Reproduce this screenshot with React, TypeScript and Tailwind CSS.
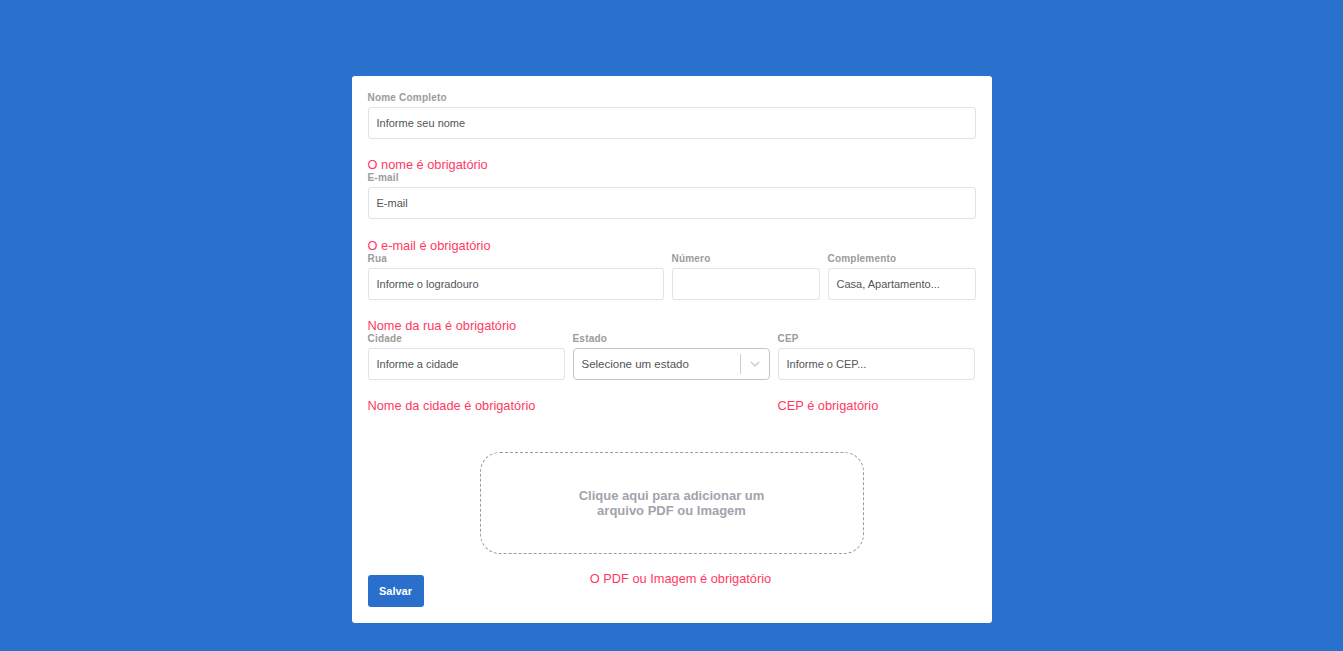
import React from 'react';

const font = { fontFamily: '"Liberation Sans", Arial, sans-serif' };

function Label({ children }: { children: React.ReactNode }) {
  return (
    <label className="block text-[10px] leading-[12px] font-bold text-[#9b9b9b] mb-[3px] tracking-[0.2px]">
      {children}
    </label>
  );
}

function Field({ label, placeholder }: { label: string; placeholder?: string }) {
  return (
    <div>
      <Label>{label}</Label>
      <div className="h-[32px] border border-[#e1e1ec] rounded-[3px] flex items-center px-[8px] text-[11px] text-[#555]">
        {placeholder}
      </div>
    </div>
  );
}

function Error({ children, className = 'mt-[18px]' }: { children?: React.ReactNode; className?: string }) {
  return (
    <div className={`${className} h-[15px] text-[12.8px] leading-[15px] text-[#ff3a62]`}>{children}</div>
  );
}

export default function App() {
  return (
    <div className="min-h-[651px] bg-[#2871cc] pt-[76px] pb-[28px]" style={font}>
      <div className="mx-auto w-[640px] bg-white rounded-[3px] px-[16px] pt-[16px] pb-[16px]">
        <Field label="Nome Completo" placeholder="Informe seu nome" />
        <Error>O nome é obrigatório</Error>

        <Field label="E-mail" placeholder="E-mail" />
        <Error className="mt-[19px]">O e-mail é obrigatório</Error>

        <div className="grid grid-cols-[2fr_1fr_1fr] gap-[8px]">
          <Field label="Rua" placeholder="Informe o logradouro" />
          <Field label="Número" />
          <Field label="Complemento" placeholder="Casa, Apartamento..." />
        </div>
        <Error>Nome da rua é obrigatório</Error>

        <div className="grid grid-cols-3 gap-[8px] pr-[1px]">
          <div>
            <Field label="Cidade" placeholder="Informe a cidade" />
            <Error>Nome da cidade é obrigatório</Error>
          </div>
          <div>
            <Label>Estado</Label>
            <div className="h-[32px] border border-[#c4c4c4] rounded-[4px] flex items-center text-[11.5px] text-[#555]">
              <span className="flex-1 pl-[8px] pt-[2px]">Selecione um estado</span>
              <span className="w-px h-[20px] bg-[#cfcfcf]" />
              <span className="w-[28px] flex items-center justify-center">
                <svg width="10" height="6" viewBox="0 0 10 6" fill="none">
                  <path d="M1 1l4 4 4-4" stroke="#c4c4c4" strokeWidth="1.2" />
                </svg>
              </span>
            </div>
          </div>
          <div>
            <Field label="CEP" placeholder="Informe o CEP..." />
            <Error>CEP é obrigatório</Error>
          </div>
        </div>

        <div className="mt-[39px] mx-auto w-[384px] h-[102px] border border-dashed border-[#9a9aa8] rounded-[20px] flex items-center justify-center text-center text-[13px] leading-[15px] font-bold text-[#a3a3ad]">
          Clique aqui para adicionar um
          <br />
          arquivo PDF ou Imagem
        </div>

        <div className="mt-[17px] grid grid-cols-[1fr_auto_1fr] items-start">
          <button className="mt-[4px] justify-self-start h-[32px] w-[56px] rounded-[3px] bg-[#2a6fcc] text-white text-[11px] font-bold">
            Salvar
          </button>
          <div className="ml-[18px] text-[12.8px] leading-[15px] text-[#ff3a62]">
            O PDF ou Imagem é obrigatório
          </div>
          <div />
        </div>
      </div>
    </div>
  );
}
